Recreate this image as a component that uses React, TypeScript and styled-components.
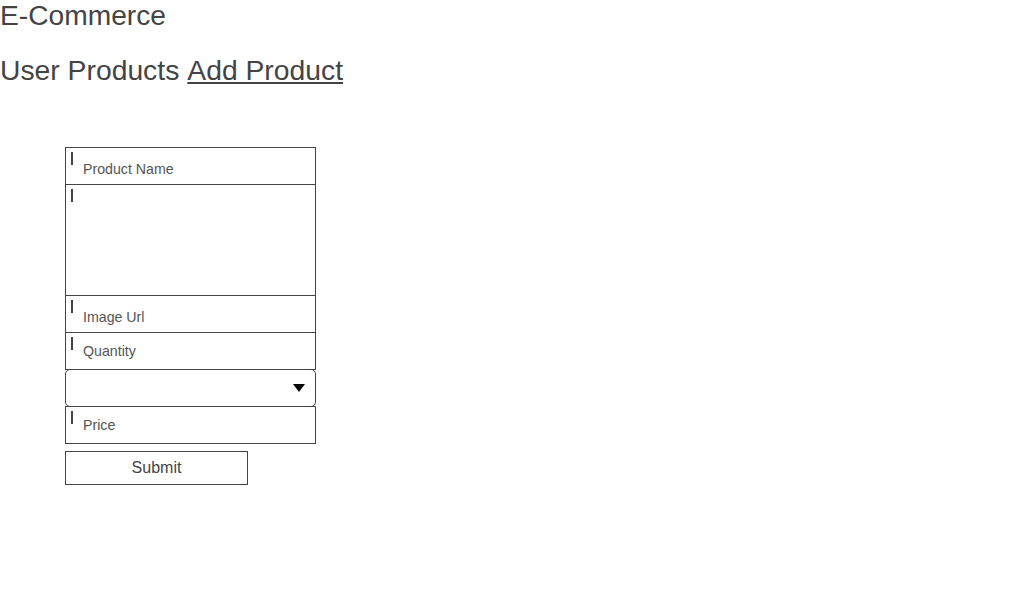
import styled, { createGlobalStyle } from "styled-components";
import { useState } from "react";

const GlobalStyle = createGlobalStyle`
    body {
        margin: 0;
        background: #fff;
        font-family: "Liberation Sans", Arial, sans-serif;
        color: #444;
    }
`;

const Title = styled.h1`
    margin: 0;
    font-size: 28.2px;
    font-weight: normal;
    line-height: 31px;
`;

const Nav = styled.nav`
    margin-top: 23px;
    font-size: 28.3px;
    line-height: 32px;
    display: flex;
    gap: 8px;
`;

const NavLink = styled.a<{ active?: boolean }>`
    color: #444;
    text-decoration: ${(props) => (props.active ? "underline" : "none")};
    text-underline-offset: 2px;
    text-decoration-thickness: 2px;
`;

const Form = styled.form`
    margin: 61px 0 0 65px;
    width: 251px;
    display: flex;
    flex-direction: column;
`;

const Field = styled.label<{ tall?: boolean }>`
    display: flex;
    align-items: flex-start;
    box-sizing: border-box;
    height: ${(props) => (props.tall ? "112px" : "38px")};
    border: 1px solid #444;
    margin-top: -1px;
    padding-left: 5px;

    &:first-child {
        margin-top: 0;
    }
`;

const Caret = styled.span`
    flex: none;
    width: 2px;
    height: 13px;
    margin-top: 4px;
    background: #444;
`;

const Input = styled.input<{ numeric?: boolean }>`
    flex: 1;
    min-width: 0;
    border: none;
    margin: ${(props) => (props.numeric ? "10px" : "13px")} 0 0;
    padding: 0 0 0 10px;
    height: 16px;
    line-height: 16px;
    background: transparent;
    font-family: "Liberation Sans", Arial, sans-serif;
    font-size: 14.2px;
    color: #444;

    &::placeholder {
        color: #555;
    }

    &:focus {
        outline: none;
    }
`;

const TextArea = styled.textarea`
    flex: 1;
    height: 100%;
    border: none;
    resize: none;
    background: transparent;
    font-family: "Liberation Sans", Arial, sans-serif;
    font-size: 14px;

    &:focus {
        outline: none;
    }
`;

const SelectBox = styled.div`
    display: flex;
    align-items: center;
    box-sizing: border-box;
    height: 38px;
    margin-top: -1px;
    border: 1px solid #444;
    border-radius: 5px;
    padding-right: 10px;
`;

const Select = styled.select`
    flex: 1;
    height: 100%;
    appearance: none;
    border: none;
    background: transparent;
    font-family: "Liberation Sans", Arial, sans-serif;
    font-size: 14px;

    &:focus {
        outline: none;
    }
`;

const Arrow = styled.span`
    width: 0;
    height: 0;
    border-left: 6px solid transparent;
    border-right: 6px solid transparent;
    border-top: 8px solid #000;
`;

const SubmitButton = styled.button`
    margin-top: 7px;
    width: 183px;
    height: 34px;
    box-sizing: border-box;
    border: 1px solid #444;
    background: #fff;
    color: #444;
    font-family: "Liberation Sans", Arial, sans-serif;
    font-size: 16px;
    cursor: pointer;
`;

function App() {
    const [category, setCategory] = useState("");

    return (
        <>
            <GlobalStyle />
            <Title>E-Commerce</Title>
            <Nav>
                <NavLink>User Products</NavLink>
                <NavLink active>Add Product</NavLink>
            </Nav>
            <Form onSubmit={(e) => e.preventDefault()}>
                <Field>
                    <Caret />
                    <Input placeholder="Product Name" />
                </Field>
                <Field tall>
                    <Caret />
                    <TextArea />
                </Field>
                <Field>
                    <Caret />
                    <Input placeholder="Image Url" />
                </Field>
                <Field>
                    <Caret />
                    <Input numeric type="number" placeholder="Quantity" />
                </Field>
                <SelectBox>
                    <Select value={category} onChange={(e) => setCategory(e.target.value)}>
                        <option value=""></option>
                    </Select>
                    <Arrow />
                </SelectBox>
                <Field>
                    <Caret />
                    <Input numeric type="number" placeholder="Price" />
                </Field>
                <SubmitButton type="submit">Submit</SubmitButton>
            </Form>
        </>
    );
}

export default App;
